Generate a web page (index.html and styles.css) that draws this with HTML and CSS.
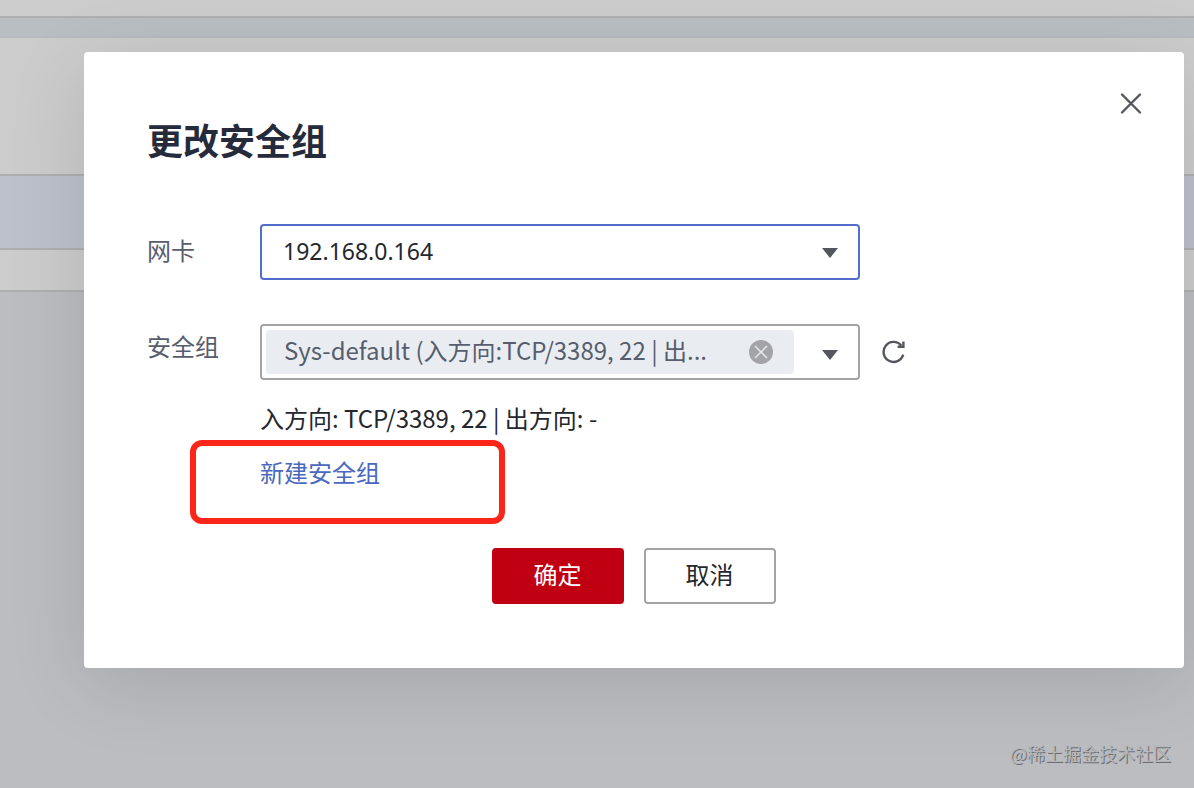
FILE: index.html
```html
<!DOCTYPE html>
<html lang="zh-CN">
  <head>
    <meta charset="UTF-8" />
    <meta name="viewport" content="width=device-width, initial-scale=1.0" />
    <title>更改安全组</title>
    <link rel="stylesheet" href="styles.css">
  </head>
  <body>
    <div class="page">
      <div class="strip topbar"></div>
      <div class="strip spacer"></div>
      <div class="strip panel"></div>
      <div class="strip table-head"></div>
      <div class="strip table-row"></div>
    </div>

    <div class="overlay">
      <div class="dialog" role="dialog" aria-labelledby="title">
        <button class="icon-btn close" type="button" aria-label="关闭">
          <svg width="24" height="24" viewBox="0 0 24 24">
            <path d="M3 3.5L21 21.5M21 3.5L3 21.5" />
          </svg>
        </button>
        <h1 id="title">更改安全组</h1>
        <form>
          <div class="row">
            <label for="nic">网卡</label>
            <div class="field">
              <div class="box active">
                <select id="nic">
                  <option>192.168.0.164</option>
                </select>
                <svg class="caret" width="16" height="10" viewBox="0 0 16 10">
                  <path d="M0 0H16L8 10Z" />
                </svg>
              </div>
            </div>
          </div>
          <div class="row">
            <label class="high" for="group">安全组</label>
            <div class="field">
              <div class="line">
                <div class="box multi">
                  <div class="chip">
                    <select id="group">
                      <option>Sys-default (入方向:TCP/3389, 22 | 出...</option>
                    </select>
                    <button class="icon-btn remove" type="button" aria-label="移除">
                      <svg width="24" height="24" viewBox="0 0 24 24">
                        <circle cx="12" cy="12" r="12" />
                        <path d="M6 6L18 18M18 6L6 18" />
                      </svg>
                    </button>
                  </div>
                  <svg class="caret" width="16" height="10" viewBox="0 0 16 10">
                    <path d="M0 0H16L8 10Z" />
                  </svg>
                </div>
                <button class="icon-btn refresh" type="button" aria-label="刷新">
                  <svg width="24" height="24" viewBox="0 0 24 24">
                    <path d="M21.2 14.6A10 10 0 1 1 19.2 5.4M21.4 1.4V6.8H15.6" />
                  </svg>
                </button>
              </div>
              <p class="hint">入方向: TCP/3389, 22 | 出方向: -</p>
              <div class="create">
                <a href="#">新建安全组</a>
                <span class="mark"></span>
              </div>
            </div>
          </div>
          <div class="actions">
            <button class="btn primary" type="button">确定</button>
            <button class="btn" type="button">取消</button>
          </div>
        </form>
      </div>
    </div>
    <div class="watermark">@稀土掘金技术社区</div>
  </body>
</html>
```
FILE: styles.css
```css
* {
  box-sizing: border-box;
}

body {
  margin: 0;
  min-height: 100vh;
  background-color: #bcbdc1;
  color: #24272e;
  font-family: "Noto Sans CJK SC", "Noto Sans", sans-serif;
  font-size: 24px;
  line-height: 36px;
}

.strip {
  border-bottom: 2px solid #adafb1;
}

.topbar {
  height: 18px;
  background-color: #cccccc;
}

.spacer {
  height: 20px;
  background-color: #b9bec3;
  border-color: #b6b9bd;
}

.panel {
  height: 138px;
  background-color: #cccccc;
}

.table-head {
  height: 74px;
  background-color: #bdc1cb;
}

.table-row {
  height: 42px;
  background-color: #cccccc;
}

.overlay {
  position: absolute;
  inset: 0;
  padding: 52px 10px 120px 84px;
}

.dialog {
  position: relative;
  padding: 64px 64px 64px 63px;
  background-color: #fff;
  border-radius: 4px;
  box-shadow: 0 16px 80px rgba(0, 0, 0, 0.12);
}

h1 {
  margin: 0 0 62px;
  color: #252b3a;
  font-size: 36px;
  line-height: 46px;
}

.row {
  display: flex;
  margin-bottom: 44px;
}

.row label {
  width: 113px;
  line-height: 52px;
  color: #575d6c;
}

.row .high {
  line-height: 44px;
}

.field {
  flex: 1;
}

.line {
  display: flex;
  align-items: center;
  gap: 22px;
}

.box {
  position: relative;
  width: 600px;
  height: 56px;
  border: 2px solid #a3a4a8;
  border-radius: 4px;
}

.active {
  border-color: #526ecc;
}

.multi {
  padding: 4px;
}

select {
  appearance: none;
  width: 100%;
  height: 100%;
  padding: 0 60px 2px 21px;
  border: none;
  background: none;
  color: #24272e;
  font: inherit;
}

#nic {
  font-family: "Noto Sans", sans-serif;
  font-size: 23px;
}

.chip {
  position: relative;
  width: 528px;
  height: 44px;
  background-color: #e9edf2;
  border-radius: 4px;
}

.chip select {
  padding: 0 60px 4px 18px;
  color: #575d6c;
}

.caret {
  position: absolute;
  top: 22px;
  right: 20px;
  fill: #53565c;
  pointer-events: none;
}

.multi .caret {
  top: 24px;
}

.icon-btn {
  display: flex;
  padding: 0;
  border: none;
  background: none;
  cursor: pointer;
}

.icon-btn path {
  fill: none;
  stroke: #53565c;
  stroke-width: 2.4;
}

.close {
  position: absolute;
  top: 39px;
  right: 41px;
}

.close path {
  stroke-linecap: round;
}

.remove {
  position: absolute;
  top: 10px;
  right: 21px;
}

.remove circle {
  fill: #a3a4a8;
}

.remove path {
  stroke: #e9edf2;
  stroke-width: 1.4;
}

.hint {
  margin: 20px 0 18px;
}

.create {
  position: relative;
}

.create a {
  display: block;
  color: #4a68bd;
  text-decoration: none;
}

/* red frame round the link */
.mark {
  position: absolute;
  top: -14px;
  left: -70px;
  width: 315px;
  height: 84px;
  border: 6px solid #fb251a;
  border-radius: 12px;
  pointer-events: none;
}

.actions {
  display: flex;
  justify-content: center;
  gap: 20px;
  margin-top: 58px;
}

.btn {
  width: 132px;
  height: 56px;
  padding: 0 0 4px;
  border: 2px solid #a3a4a8;
  border-radius: 4px;
  background-color: #fff;
  color: #24272e;
  font: inherit;
  cursor: pointer;
}

.primary {
  border-color: #c00012;
  background-color: #c00012;
  color: #fff;
}

.watermark {
  position: absolute;
  right: 23px;
  bottom: 22px;
  color: #b4b6b9;
  font-size: 18px;
  line-height: 26px;
  text-shadow: 1px 1px 0 #6d6e72;
}
```
